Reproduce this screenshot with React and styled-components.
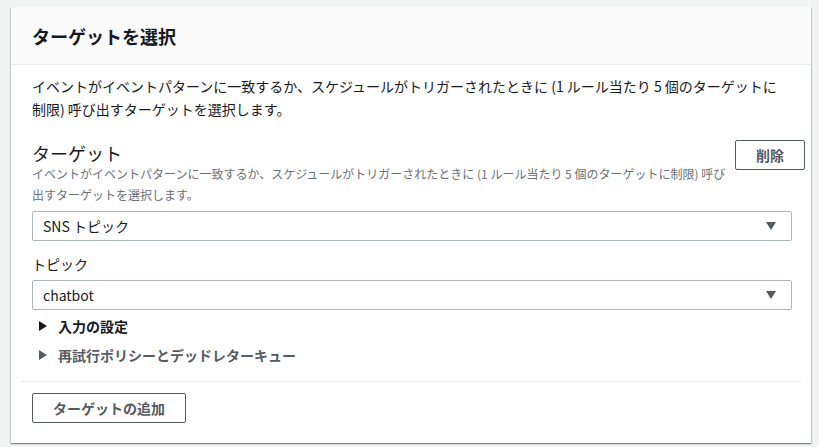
import React from "react";
import styled, { createGlobalStyle } from "styled-components";

const GlobalStyle = createGlobalStyle`
  html, body {
    margin: 0;
    padding: 0;
    background: #f2f3f3;
  }
  body {
    font-family: "Noto Sans CJK JP", "Noto Sans", "Liberation Sans", sans-serif;
    color: #16191f;
  }
`;

const Page = styled.div`
  padding: 7px 8px 6px 11px;
`;

const Card = styled.section`
  width: 800px;
  background: #fff;
  box-shadow: 0 1px 1px 0 rgba(0, 28, 36, 0.3), 1px 1px 1px 0 rgba(0, 28, 36, 0.15),
    -1px 1px 1px 0 rgba(0, 28, 36, 0.15);
`;

const Header = styled.header`
  height: 58px;
  box-sizing: border-box;
  display: flex;
  align-items: center;
  padding: 0 21px;
  background: #fafafa;
  border-bottom: 1px solid #eaeded;
`;

const Title = styled.h2`
  margin: 0;
  font-size: 18px;
  font-weight: 700;
  line-height: 22px;
`;

const Body = styled.div`
  padding: 10px 10px 20px;
`;

const Content = styled.div`
  padding: 0 9px 0 11px;
`;

const Intro = styled.p`
  margin: 0;
  padding-right: 8px;
  font-size: 14px;
  line-height: 23px;
`;

const TargetRow = styled.div`
  display: flex;
  align-items: flex-start;
  gap: 4px;
  margin-top: 20px;
`;

const TargetText = styled.div`
  flex: 1;
`;

const TargetLabel = styled.div`
  font-size: 18px;
  line-height: 24px;
`;

const Hint = styled.div`
  font-size: 12px;
  line-height: 21px;
  color: #687078;
  margin-top: -2px;
`;

const Button = styled.button`
  flex: none;
  height: 30px;
  padding: 0 ${(p) => p.$pad || 19}px;
  border: 1px solid #545b64;
  border-radius: 2px;
  background: #fff;
  color: #545b64;
  font-family: inherit;
  font-size: 14px;
  font-weight: 700;
  line-height: 1;
  cursor: pointer;
  margin-top: ${(p) => p.$top || 0}px;
  margin-right: ${(p) => p.$right || 0}px;
`;

const SelectBox = styled.div`
  height: 30px;
  box-sizing: border-box;
  display: flex;
  align-items: center;
  justify-content: space-between;
  padding: 0 15px 0 10px;
  border: 1px solid #aab7b8;
  border-radius: 2px;
  font-size: 14px;
  margin-top: ${(p) => p.$top || 0}px;
`;

const Caret = styled.span`
  width: 0;
  height: 0;
  border-left: 5px solid transparent;
  border-right: 5px solid transparent;
  border-top: 8px solid #545b64;
`;

const FieldLabel = styled.div`
  font-size: 14px;
  line-height: 22px;
  margin-top: 12px;
`;

const Expander = styled.div`
  display: flex;
  align-items: center;
  height: 22px;
  margin-top: ${(p) => p.$top}px;
  padding-left: 7px;
  font-size: 14px;
  font-weight: 700;
  color: ${(p) => (p.$muted ? "#545b64" : "#16191f")};
`;

const Arrow = styled.span`
  width: 0;
  height: 0;
  margin-right: 11px;
  border-top: 5px solid transparent;
  border-bottom: 5px solid transparent;
  border-left: 8px solid ${(p) => (p.$muted ? "#545b64" : "#16191f")};
`;

const Footer = styled.div`
  margin-top: 15px;
  padding: 11px 0 0 11px;
  border-top: 1px solid #eaeded;
`;

function Select({ value, top }) {
  return (
    <SelectBox $top={top}>
      <span>{value}</span>
      <Caret />
    </SelectBox>
  );
}

export default function App() {
  return (
    <>
      <GlobalStyle />
      <Page>
        <Card>
          <Header>
            <Title>ターゲットを選択</Title>
          </Header>
          <Body>
            <Content>
              <Intro>
                イベントがイベントパターンに一致するか、スケジュールがトリガーされたときに (1 ルール当たり 5 個のターゲットに制限) 呼び出すターゲットを選択します。
              </Intro>
              <TargetRow>
                <TargetText>
                  <TargetLabel>ターゲット</TargetLabel>
                  <Hint>
                    イベントがイベントパターンに一致するか、スケジュールがトリガーされたときに (1 ルール当たり 5 個のターゲットに制限) 呼び出すターゲットを選択します。
                  </Hint>
                </TargetText>
                <Button $pad={20} $top={-1} $right={-13}>削除</Button>
              </TargetRow>
              <Select value="SNS トピック" top={6} />
              <FieldLabel>トピック</FieldLabel>
              <Select value="chatbot" top={5} />
              <Expander $top={5}>
                <Arrow />
                入力の設定
              </Expander>
              <Expander $top={7} $muted>
                <Arrow $muted />
                再試行ポリシーとデッドレターキュー
              </Expander>
            </Content>
            <Footer>
              <Button $pad={20}>ターゲットの追加</Button>
            </Footer>
          </Body>
        </Card>
      </Page>
    </>
  );
}
